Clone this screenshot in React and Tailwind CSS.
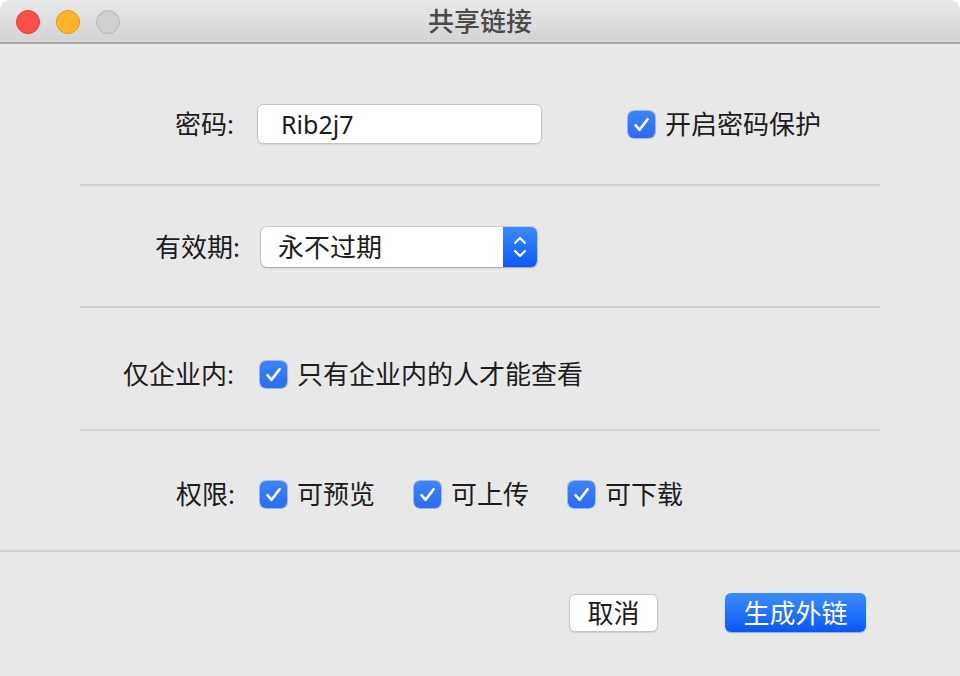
import React, { useState } from 'react';

const FONT = { fontFamily: '"Noto Sans", "Noto Sans CJK SC", sans-serif' };

function CheckBox({ checked, onChange }) {
    return (
        <button
            type="button"
            onClick={onChange}
            className="w-[27px] h-[27px] shrink-0 rounded-[6px] flex items-center justify-center bg-gradient-to-b from-[#3d84f7] to-[#2a6bf2] shadow-[0_0_0_1px_rgba(30,90,220,0.35)]"
        >
            {checked && (
                <svg width="27" height="27" viewBox="0 0 27 27">
                    <path d="M7.5 14.2 L11.6 18.8 L19.6 8.2" fill="none" stroke="#fff" strokeWidth="2.6" strokeLinecap="round" strokeLinejoin="round" />
                </svg>
            )}
        </button>
    );
}

function CheckItem({ label, checked, onChange }) {
    return (
        <label className="flex items-center gap-[10px] cursor-default">
            <CheckBox checked={checked} onChange={onChange} />
            <span className="text-[26px] leading-[36px] text-[#1c1c1c]">{label}</span>
        </label>
    );
}

// label column: width sets where the colon ends
function Row({ label, width, children }) {
    return (
        <div className="flex items-center h-[40px]">
            <div className="shrink-0 text-right text-[26px] leading-[36px] text-[#1c1c1c]" style={{ width }}>{label}</div>
            {children}
        </div>
    );
}

function Divider() {
    return <div className="mx-[80px] h-[2px] bg-[#d2d2d2]" />;
}

export default function App() {
    const [protect, setProtect] = useState(true);
    const [internal, setInternal] = useState(true);
    const [perms, setPerms] = useState({ preview: true, upload: true, download: true });
    const toggle = (k) => setPerms((p) => ({ ...p, [k]: !p[k] }));

    return (
        <div className="w-[960px] h-[676px] bg-white" style={FONT}>
            <div className="w-full h-full bg-[#e8e8e8] rounded-t-[10px] overflow-hidden flex flex-col">
                {/* title bar */}
                <div className="relative h-[44px] shrink-0 bg-gradient-to-b from-[#e9e9e9] to-[#d3d3d3] border-b-[2px] border-[#a9a9a9] flex items-center justify-center">
                    <div className="absolute left-[16px] top-[10px] flex gap-[16px]">
                        <span className="w-[24px] h-[24px] rounded-full bg-[#fc4f4c] border border-[#de3c39]" />
                        <span className="w-[24px] h-[24px] rounded-full bg-[#fdb32a] border border-[#dd9a1c]" />
                        <span className="w-[24px] h-[24px] rounded-full bg-[#cfcfcf] border border-[#b6b6b6]" />
                    </div>
                    <span className="text-[26px] leading-[36px] font-medium text-[#4a4a4a]">共享链接</span>
                </div>

                {/* password */}
                <div className="pt-[60px] pb-[40px]">
                    <Row label="密码:" width={234}>
                        <div className="ml-[23px] w-[285px] h-[40px] rounded-[6px] bg-white border border-[#c3c3c3] shadow-[0_1px_1px_rgba(0,0,0,0.08)] flex items-center pl-[23px]">
                            <span className="text-[25px] leading-[36px] text-[#1c1c1c]">Rib2j7</span>
                        </div>
                        <div className="ml-[86px]">
                            <CheckItem label="开启密码保护" checked={protect} onChange={() => setProtect(!protect)} />
                        </div>
                    </Row>
                </div>
                <Divider />

                {/* expiry */}
                <div className="pt-[41px] pb-[39px]">
                    <Row label="有效期:" width={240}>
                        <div className="ml-[21px] w-[276px] h-[40px] rounded-[6px] bg-white shadow-[0_0_0_1px_rgba(0,0,0,0.12),0_1px_2px_rgba(0,0,0,0.2)] flex overflow-hidden">
                            <div className="flex-1 flex items-center pl-[17px]">
                                <span className="text-[26px] leading-[36px] text-[#1c1c1c]">永不过期</span>
                            </div>
                            <div className="w-[34px] bg-gradient-to-b from-[#3a8afd] to-[#0c58f6] flex items-center justify-center">
                                <svg width="16" height="26" viewBox="0 0 16 26">
                                    <path d="M3 9 L8 4 L13 9" fill="none" stroke="#fff" strokeWidth="2.2" strokeLinecap="round" strokeLinejoin="round" />
                                    <path d="M3 17 L8 22 L13 17" fill="none" stroke="#fff" strokeWidth="2.2" strokeLinecap="round" strokeLinejoin="round" />
                                </svg>
                            </div>
                        </div>
                    </Row>
                </div>
                <Divider />

                {/* internal */}
                <div className="pt-[46px] pb-[35px]">
                    <Row label="仅企业内:" width={234}>
                        <div className="ml-[26px]">
                            <CheckItem label="只有企业内的人才能查看" checked={internal} onChange={() => setInternal(!internal)} />
                        </div>
                    </Row>
                </div>
                <Divider />

                {/* permissions */}
                <div className="pt-[43px] pb-[36px]">
                    <Row label="权限:" width={235}>
                        <div className="ml-[25px] flex gap-[39px]">
                            <CheckItem label="可预览" checked={perms.preview} onChange={() => toggle('preview')} />
                            <CheckItem label="可上传" checked={perms.upload} onChange={() => toggle('upload')} />
                            <CheckItem label="可下载" checked={perms.download} onChange={() => toggle('download')} />
                        </div>
                    </Row>
                </div>
                <div className="h-[2px] bg-[#d2d2d2]" />

                {/* footer */}
                <div className="pt-[41px] flex items-center">
                    <button className="ml-[569px] w-[89px] h-[38px] rounded-[6px] bg-white border border-[#c4c4c4] shadow-[0_1px_1px_rgba(0,0,0,0.1)] text-[26px] leading-[36px] text-[#1c1c1c]">
                        取消
                    </button>
                    <button className="ml-[67px] w-[141px] h-[39px] rounded-[6px] bg-gradient-to-b from-[#3c8cfd] to-[#0b56f5] shadow-[0_1px_1px_rgba(0,40,160,0.3)] text-[26px] leading-[36px] text-white">
                        生成外链
                    </button>
                </div>
            </div>
        </div>
    );
}
